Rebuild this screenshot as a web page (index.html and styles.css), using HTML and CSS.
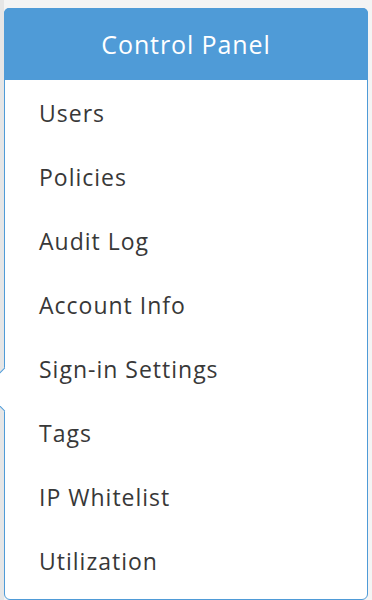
FILE: index.html
```html
<!DOCTYPE html>
<html lang="en">
<head>
    <meta charset="UTF-8">
    <meta name="viewport" content="width=device-width, initial-scale=1.0">
    <title>Control Panel</title>
    <link rel="stylesheet" href="styles.css">
</head>
<body>
    <div class="page">
        <div class="panel">
            <div class="panel-header">Control Panel</div>
            <ul class="panel-menu">
                <li><a href="#">Users</a></li>
                <li><a href="#">Policies</a></li>
                <li><a href="#">Audit Log</a></li>
                <li><a href="#">Account Info</a></li>
                <li><a href="#">Sign-in Settings</a></li>
                <li><a href="#">Tags</a></li>
                <li><a href="#">IP Whitelist</a></li>
                <li><a href="#">Utilization</a></li>
            </ul>
            <span class="panel-arrow"></span>
        </div>
    </div>
</body>
</html>
```

FILE: styles.css
```css
html, body {
    margin: 0;
    height: 100%;
}
body {
    font-family: 'Open Sans', Lato, sans-serif;
    background: linear-gradient(90deg, #e6e6e6 0, #e6e6e6 4px, #f4f4f4 4px);
    overflow: hidden;
}
.page {
    padding: 8px 4px 0 4px;
}
.panel {
    position: relative;
    background: #fff;
    border: 1px solid #4f9bd7;
    border-radius: 6px;
    height: 590px;
}
.panel-header {
    background: #4f9bd7;
    color: #fff;
    height: 72px;
    line-height: 72px;
    text-align: center;
    font-size: 25px;
    letter-spacing: 0.9px;
    border-radius: 5px 5px 0 0;
    margin: -1px -1px 0 -1px;
}
.panel-menu {
    list-style: none;
    margin: 0;
    padding: 0;
}
.panel-menu li {
    height: 64px;
    display: flex;
    align-items: center;
    padding-left: 34px;
}
.panel-menu a {
    color: #383838;
    font-size: 23px;
    letter-spacing: 1px;
    text-decoration: none;
    padding-top: 2px;
}
.panel-arrow {
    position: absolute;
    left: -16px;
    top: 365px;
    width: 30px;
    height: 30px;
    background: #fff;
    border-left: 1px solid #4f9bd7;
    border-bottom: 1px solid #4f9bd7;
    transform: rotate(45deg);
}
```
